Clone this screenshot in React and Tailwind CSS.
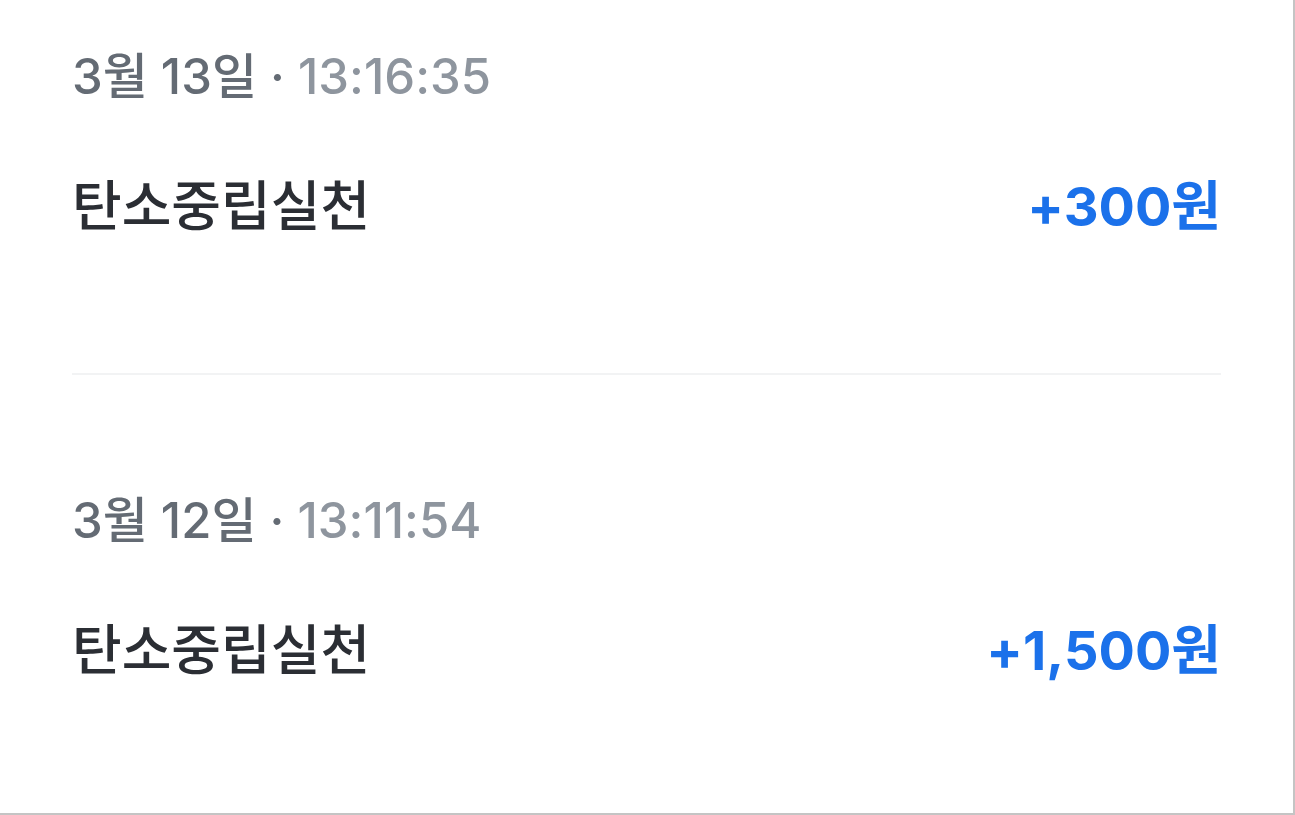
import React from "react";

const items = [
  { day: "3월 13일", time: "13:16:35", title: "탄소중립실천", amount: "+300원", top: "pt-[47px]" },
  { day: "3월 12일", time: "13:11:54", title: "탄소중립실천", amount: "+1,500원", top: "pt-[116px]" },
];

export default function App() {
  return (
    <div
      className="h-[815px] w-[1295px] overflow-hidden border-r-2 border-b-2 border-[#c4c4c4] bg-white"
      style={{ fontFamily: 'Inter, "Noto Sans CJK KR", sans-serif' }}
    >
      {items.map((item, i) => (
        <div key={i} className={`mx-[72px] ${item.top} ${i === 0 ? "border-b-2 border-[#f2f3f4] pb-[134px]" : ""}`}>
          <div className="text-[49px] leading-[60px] font-medium">
            <span className="text-[#646b74]">{item.day} · </span>
            <span className="text-[#8e959e]">{item.time}</span>
          </div>
          <div className="mt-[68px] flex items-center justify-between leading-[64px]">
            <span className="text-[54px] font-medium text-[#2b2e34]">{item.title}</span>
            <span className="text-[54px] font-bold text-[#1b71ea]">{item.amount}</span>
          </div>
        </div>
      ))}
    </div>
  );
}
